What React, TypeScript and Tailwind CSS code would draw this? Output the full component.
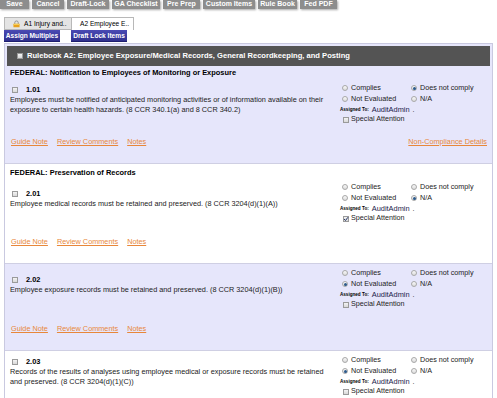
import React from "react"

type Choice = "complies" | "not" | "noteval" | "na"

type Item = {
  title?: string
  num: string
  desc: string
  choice: Choice
  special: boolean
  bg: string
  nonCompliance?: boolean
  top: string
  titleGap: string
  linksGap: string
  bottom: string
}

const items: Item[] = [
  {
    title: "FEDERAL: Notification to Employees of Monitoring or Exposure",
    num: "1.01",
    desc: "Employees must be notified of anticipated monitoring activities or of information available on their exposure to certain health hazards. (8 CCR 340.1(a) and 8 CCR 340.2)",
    choice: "not",
    special: false,
    bg: "bg-[#e6e6fb]",
    nonCompliance: true,
    top: "pt-0",
    titleGap: "mb-[5px]",
    linksGap: "mt-[13px]",
    bottom: "pb-[16px]",
  },
  {
    title: "FEDERAL: Preservation of Records",
    num: "2.01",
    desc: "Employee medical records must be retained and preserved. (8 CCR 3204(d)(1)(A))",
    choice: "na",
    special: true,
    bg: "bg-white",
    top: "pt-[4px]",
    titleGap: "mb-[4px]",
    linksGap: "mt-[14px]",
    bottom: "pb-[16px]",
  },
  {
    num: "2.02",
    desc: "Employee exposure records must be retained and preserved. (8 CCR 3204(d)(1)(B))",
    choice: "noteval",
    special: false,
    bg: "bg-[#e6e6fb]",
    top: "pt-[4px]",
    titleGap: "",
    linksGap: "mt-[15px]",
    bottom: "pb-[16px]",
  },
  {
    num: "2.03",
    desc: "Records of the results of analyses using employee medical or exposure records must be retained and preserved. (8 CCR 3204(d)(1)(C))",
    choice: "noteval",
    special: false,
    bg: "bg-white",
    top: "pt-[4px]",
    titleGap: "",
    linksGap: "mt-[15px]",
    bottom: "pb-[17px]",
  },
]

const tools = [
  { label: "Save", w: "w-[29px]" },
  { label: "Cancel", w: "w-[32px]" },
  { label: "Draft-Lock", w: "w-[42px]" },
  { label: "GA Checklist", w: "w-[48px]" },
  { label: "Pre Prep", w: "w-[37px]" },
  { label: "Custom Items", w: "w-[52px]" },
  { label: "Rule Book", w: "w-[39px]" },
  { label: "Fed PDF", w: "w-[37px]" },
]

function Box({ checked = false }: { checked?: boolean }) {
  return (
    <span className="relative inline-block w-[6px] h-[6px] border border-[#9a9a9a] bg-gradient-to-b from-[#f4f4f4] to-[#d8d8d8] shrink-0">
      {checked && (
        <svg viewBox="0 0 6 6" className="absolute -left-[1px] -top-[1px] w-[6px] h-[6px]">
          <path d="M1 3 L2.5 4.5 L5 1.2" stroke="#2a3a6a" strokeWidth="1" fill="none" />
        </svg>
      )}
    </span>
  )
}

function Radio({ on }: { on: boolean }) {
  return (
    <span className="inline-flex items-center justify-center w-[6px] h-[6px] rounded-full border border-[#a8a8a8] bg-gradient-to-b from-[#fafafa] to-[#dcdcdc] shrink-0">
      {on && <span className="w-[3px] h-[3px] rounded-full bg-[#2c5a8c]" />}
    </span>
  )
}

function Lock() {
  return (
    <svg viewBox="0 0 8 8" className="w-[7px] h-[8px]">
      <path d="M2 4 V2.5 A2 2 0 0 1 6 2.5 V4" stroke="#8a8a8a" strokeWidth="1" fill="none" />
      <rect x="0.5" y="3.8" width="7" height="4" rx="0.5" fill="#e8a21c" />
      <rect x="0.5" y="3.8" width="7" height="1.3" fill="#f6cf5a" />
    </svg>
  )
}

function Opt({ on, label }: { on: boolean; label: string }) {
  return (
    <span className="flex items-center gap-[3px]">
      <Radio on={on} />
      <span>{label}</span>
    </span>
  )
}

function Row({ item }: { item: Item }) {
  return (
    <div className={`${item.bg} ${item.top} px-[5px] ${item.bottom} border-b border-[#cfcfe3] text-[7.3px] text-[#222]`}>
      {item.title && (
        <div className={`h-[10px] leading-[10px] font-bold text-[7.45px] text-black ${item.titleGap}`}>{item.title}</div>
      )}
      <div className="flex items-center">
        <div className="w-[330px] pb-[8px]">
          <div className="h-[11px] flex items-center pl-[2px] gap-[8px]">
            <Box />
            <span className="font-bold text-[7.4px] text-black">{item.num}</span>
          </div>
          <div className="w-[326px] leading-[10px]">{item.desc}</div>
        </div>
        <div className="flex-1 text-[7.2px]">
          <div className="grid grid-cols-[69px_auto] pl-[2px]">
            <div className="h-[11px] flex items-center"><Opt on={item.choice === "complies"} label="Complies" /></div>
            <div className="h-[11px] flex items-center"><Opt on={item.choice === "not"} label="Does not comply" /></div>
            <div className="h-[11px] flex items-center"><Opt on={item.choice === "noteval"} label="Not Evaluated" /></div>
            <div className="h-[11px] flex items-center"><Opt on={item.choice === "na"} label="N/A" /></div>
          </div>
          <div className="h-[10px] flex items-center gap-[3px]">
            <span className="font-bold text-[4.6px] text-black">Assigned To:</span>
            <span className="text-[7.4px] text-[#1a1a4a]">AuditAdmin</span>
            <span>.</span>
          </div>
          <div className="h-[9px] flex items-center gap-[2px] pl-[3px]">
            <Box checked={item.special} />
            <span>Special Attention</span>
          </div>
        </div>
      </div>
      <div className={`${item.linksGap} h-[10px] leading-[10px] flex text-[#e8873a] underline pl-[1px]`}>
        <span>Guide Note</span>
        <span className="ml-[9px]">Review Comments</span>
        <span className="ml-[9px]">Notes</span>
        {item.nonCompliance && <span className="ml-auto">Non-Compliance Details</span>}
      </div>
    </div>
  )
}

export default function App() {
  return (
    <div className="w-[497px] h-[398px] overflow-hidden bg-white font-['Liberation_Sans',Arial,sans-serif]">
      <div className="flex gap-[3px]">
        {tools.map((t) => (
          <div
            key={t.label}
            className={`${t.w} h-[9px] text-center bg-[#8d8d8d] text-white font-bold text-[7px] leading-[7px] shadow-[1px_1px_2px_rgba(0,0,0,0.35)]`}
          >
            {t.label}
          </div>
        ))}
      </div>
      <div className="flex pl-[4px] mt-[8px] text-[6.6px] text-black">
        <div className="w-[68px] h-[13px] flex items-center gap-[4px] pl-[8px] bg-[#e4e4e4] border border-[#b8b8b8]">
          <Lock />
          <span>A1 Injury and..</span>
        </div>
        <div className="w-[62px] h-[13px] flex items-center pl-[8px] bg-white border border-l-0 border-b-0 border-[#b8b8b8]">
          <span>A2 Employee E..</span>
        </div>
      </div>
      <div className="flex pl-[4px] gap-[11px]">
        <div className="w-[56px] h-[12px] flex items-center justify-center bg-gradient-to-b from-[#4a4ab4] to-[#30308e] border-b border-[#1e1e70] text-white font-bold text-[6.6px]">
          Assign Multiples
        </div>
        <div className="w-[56px] h-[12px] flex items-center justify-center bg-gradient-to-b from-[#4a4ab4] to-[#30308e] border-b border-[#1e1e70] text-white font-bold text-[6.6px]">
          Draft Lock Items
        </div>
      </div>
      <div className="ml-[4px] w-[489px] mt-[1px] border border-[#c9c9e0] bg-[#e6e6fb]">
        <div className="p-[2px]">
          <div className="h-[20px] bg-[#545454] flex items-center pl-[10px] gap-[4px]">
            <Box />
            <span className="text-white font-bold text-[7.6px]">
              Rulebook A2: Employee Exposure/Medical Records, General Recordkeeping, and Posting
            </span>
          </div>
        </div>
        {items.map((it) => (
          <Row key={it.num} item={it} />
        ))}
      </div>
    </div>
  )
}
